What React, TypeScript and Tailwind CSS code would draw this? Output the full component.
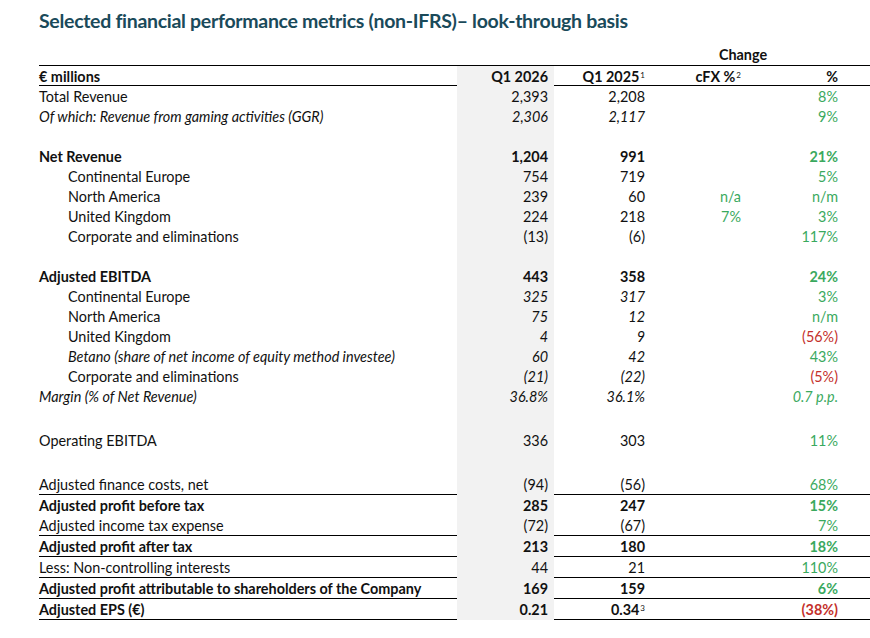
import { ReactNode } from "react";

type Row = {
  label: ReactNode;
  indent?: boolean;
  bold?: boolean;
  italicLabel?: boolean;
  italicValues?: boolean;
  italicPct?: boolean;
  cur?: ReactNode;
  prev?: ReactNode;
  cfx?: string;
  pct?: string;
  red?: boolean;
  line?: boolean;
};

const grid = "grid grid-cols-[418px_97px_96px_95px_99px]";
const green = "text-[#3aa95e]";
const red = "text-[#c4302b]";

const Sup = ({ n }: { n: string }) => (
  <span className="text-[8px] leading-none align-top relative top-[4px] ml-[1px] font-normal">{n}</span>
);

const rows: (Row | { gap: number })[] = [
  { label: "Total Revenue", cur: "2,393", prev: "2,208", pct: "8%" },
  { label: "Of which: Revenue from gaming activities (GGR)", italicLabel: true, italicValues: true, cur: "2,306", prev: "2,117", pct: "9%" },
  { gap: 20 },
  { label: "Net Revenue", bold: true, cur: "1,204", prev: "991", pct: "21%" },
  { label: "Continental Europe", indent: true, cur: "754", prev: "719", pct: "5%" },
  { label: "North America", indent: true, cur: "239", prev: "60", cfx: "n/a", pct: "n/m" },
  { label: "United Kingdom", indent: true, cur: "224", prev: "218", cfx: "7%", pct: "3%" },
  { label: "Corporate and eliminations", indent: true, cur: "(13)", prev: "(6)", pct: "117%" },
  { gap: 20 },
  { label: "Adjusted EBITDA", bold: true, cur: "443", prev: "358", pct: "24%" },
  { label: "Continental Europe", indent: true, italicValues: true, cur: "325", prev: "317", pct: "3%" },
  { label: "North America", indent: true, italicValues: true, cur: "75", prev: "12", pct: "n/m" },
  { label: "United Kingdom", indent: true, italicValues: true, cur: "4", prev: "9", pct: "(56%)", red: true },
  { label: "Betano (share of net income of equity method investee)", indent: true, italicLabel: true, italicValues: true, cur: "60", prev: "42", pct: "43%" },
  { label: "Corporate and eliminations", indent: true, italicValues: true, cur: "(21)", prev: "(22)", pct: "(5%)", red: true },
  { label: "Margin (% of Net Revenue)", italicLabel: true, italicValues: true, italicPct: true, cur: "36.8%", prev: "36.1%", pct: "0.7 p.p." },
  { gap: 24 },
  { label: "Operating EBITDA", cur: "336", prev: "303", pct: "11%" },
  { gap: 24 },
  { label: "Adjusted finance costs, net", cur: "(94)", prev: "(56)", pct: "68%", line: true },
  { label: "Adjusted profit before tax", bold: true, cur: "285", prev: "247", pct: "15%" },
  { label: "Adjusted income tax expense", cur: "(72)", prev: "(67)", pct: "7%", line: true },
  { label: "Adjusted profit after tax", bold: true, cur: "213", prev: "180", pct: "18%", line: true },
  { label: "Less: Non-controlling interests", cur: "44", prev: "21", pct: "110%", line: true },
  { label: "Adjusted profit attributable to shareholders of the Company", bold: true, cur: "169", prev: "159", pct: "6%", line: true },
  { label: "Adjusted EPS (€)", bold: true, cur: "0.21", prev: <>0.34<Sup n="3" /></>, pct: "(38%)", red: true, line: true },
];

const App = () => {
  return (
    <div className="w-[870px] h-[638px] bg-white pl-[39px] pt-[8px] text-[#111] font-['Lato','Liberation_Sans',sans-serif] text-[14.4px]">
      <h1 className="text-[19.5px] font-bold text-[#1a4a5a] leading-[26px] tracking-[-0.3px]">
        Selected financial performance metrics (non-IFRS)– look-through basis
      </h1>
      <div className={`${grid} h-[31px] items-end`}>
        <div />
        <div />
        <div />
        <div className="col-span-2 text-center font-bold pr-[8px] leading-[20px]">Change</div>
      </div>
      <div className={`${grid} h-[21px] border-y border-black items-center font-bold leading-[20px]`}>
        <div className="pt-[1px]">€ millions</div>
        <div className="bg-[#f2f2f2] text-right pr-[6px] pt-[1px] h-full">Q1 2026</div>
        <div className="text-right pr-[5px] pt-[1px]">Q1 2025<Sup n="1" /></div>
        <div className="text-right pr-[4px] pt-[1px]">cFX %<Sup n="2" /></div>
        <div className="text-right pr-[6px] pt-[1px]">%</div>
      </div>
      {rows.map((r, i) => {
        if ("gap" in r) {
          return (
            <div key={i} className={grid} style={{ height: r.gap }}>
              <div />
              <div className="bg-[#f2f2f2]" />
            </div>
          );
        }
        return (
          <div
            key={i}
            className={`${grid} leading-[20px] ${r.line ? "h-[21px] border-b border-black" : "h-[20px]"} ${r.bold ? "font-bold" : ""}`}
          >
            <div className={`pt-[1px] ${r.indent ? "pl-[29px]" : ""} ${r.italicLabel ? "italic" : ""} whitespace-nowrap`}>{r.label}</div>
            <div className={`pt-[1px] bg-[#f2f2f2] text-right pr-[6px] ${r.italicValues ? "italic" : ""}`}>{r.cur}</div>
            <div className={`pt-[1px] text-right pr-[5px] ${r.italicValues ? "italic" : ""}`}>{r.prev}</div>
            <div className={`pt-[1px] text-right pr-[4px] ${green}`}>{r.cfx}</div>
            <div className={`pt-[1px] text-right pr-[6px] ${r.red ? red : green} ${r.italicPct ? "italic" : ""}`}>{r.pct}</div>
          </div>
        );
      })}
    </div>
  );
};

export default App;
